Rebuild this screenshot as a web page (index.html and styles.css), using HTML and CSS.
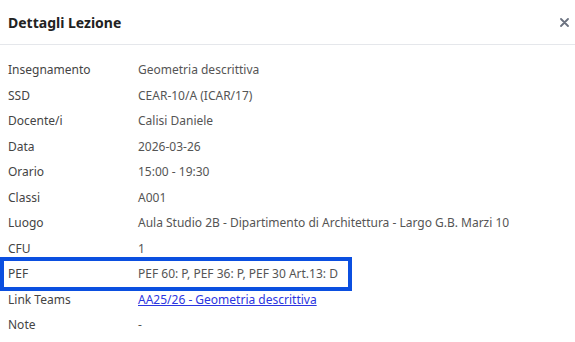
FILE: index.html
```html
<!DOCTYPE html>
<html lang="it">
<head>
  <meta charset="UTF-8">
  <title>Dettagli Lezione</title>
  <link rel="stylesheet" href="styles.css">
</head>
<body>
  <div class="modal">
    <div class="modal-header">
      <h2>Dettagli Lezione</h2>
      <button class="close" type="button" aria-label="Chiudi">
        <svg width="9" height="9" viewBox="0 0 9 9"><path d="M1 1L8 8M8 1L1 8" stroke="currentColor" stroke-width="1.8" stroke-linecap="round"/></svg>
      </button>
    </div>
    <div class="modal-body">
      <div class="row"><span class="label">Insegnamento</span><span class="value">Geometria descrittiva</span></div>
      <div class="row"><span class="label">SSD</span><span class="value">CEAR-10/A (ICAR/17)</span></div>
      <div class="row"><span class="label">Docente/i</span><span class="value">Calisi Daniele</span></div>
      <div class="row"><span class="label">Data</span><span class="value">2026-03-26</span></div>
      <div class="row"><span class="label">Orario</span><span class="value">15:00 - 19:30</span></div>
      <div class="row"><span class="label">Classi</span><span class="value">A001</span></div>
      <div class="row"><span class="label">Luogo</span><span class="value">Aula Studio 2B - Dipartimento di Architettura - Largo G.B. Marzi 10</span></div>
      <div class="row"><span class="label">CFU</span><span class="value">1</span></div>
      <div class="row highlight"><span class="label">PEF</span><span class="value">PEF 60: P, PEF 36: P, PEF 30 Art.13: D</span></div>
      <div class="row"><span class="label">Link Teams</span><span class="value"><a href="#">AA25/26 - Geometria descrittiva</a></span></div>
      <div class="row"><span class="label">Note</span><span class="value">-</span></div>
    </div>
  </div>
</body>
</html>
```

FILE: styles.css
```css
body {
  margin: 0;
  font-family: "Noto Sans", "Open Sans", sans-serif;
  background-color: #fff;
  color: #444;
}

.modal {
  width: 575px;
}

.modal-header {
  display: flex;
  align-items: center;
  justify-content: space-between;
  height: 44px;
  padding: 0 6px 0 8px;
  border-bottom: 1px solid #e5e7eb;
}

.modal-header h2 {
  margin: 0;
  font-size: 14px;
  font-weight: bold;
  color: #222;
}

.close {
  border: none;
  background: none;
  padding: 0;
  color: #6b7280;
  display: flex;
}

.modal-body {
  padding-top: 12px;
}

.row {
  display: grid;
  grid-template-columns: 130px 1fr;
  width: 336px;
  margin-left: 4px;
  padding: 0 4px;
  font-size: 12px;
  line-height: 25.5px;
  white-space: nowrap;
}

.label {
  color: #444;
}

.value {
  color: #555;
}

.value a {
  color: #2b35e0;
}

.highlight {
  outline: 4px solid #0b4fe0;
}
```
